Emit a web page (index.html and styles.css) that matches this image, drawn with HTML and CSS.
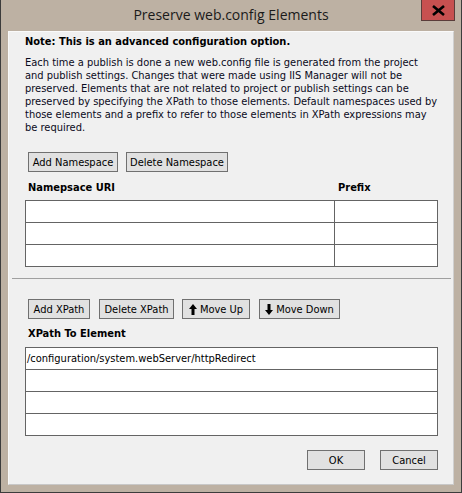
FILE: index.html
```html
<!DOCTYPE html>
<html>
<head>
<meta charset="utf-8">
<link rel="stylesheet" href="styles.css">
</head>
<body>
<div class="window">
  <div class="titlebar">
    <span class="title">Preserve web.config Elements</span>
    <div class="close">
      <svg width="13" height="11" viewBox="0 0 13 11"><path d="M1 1 L12 10 M12 1 L1 10" stroke="#000" stroke-width="2.6"/></svg>
    </div>
  </div>
  <div class="panel">
    <p class="note">Note: This is an advanced configuration option.</p>
    <p class="desc">Each time a publish is done a new web.config file is generated from the project and publish settings. Changes that were made using IIS Manager will not be preserved. Elements that are not related to project or publish settings can be preserved by specifying the XPath to those elements. Default namespaces used by those elements and a prefix to refer to those elements in XPath expressions may be required.</p>
    <div class="btnrow top">
      <button class="btn w-addns">Add Namespace</button>
      <button class="btn w-delns">Delete Namespace</button>
    </div>
    <div class="ns-head">
      <span class="h-uri">Namepsace URI</span>
      <span class="h-prefix">Prefix</span>
    </div>
    <div class="grid ns">
      <div class="row"><div class="cell uri"></div><div class="cell prefix"></div></div>
      <div class="row"><div class="cell uri"></div><div class="cell prefix"></div></div>
      <div class="row"><div class="cell uri"></div><div class="cell prefix"></div></div>
    </div>
    <div class="sep"></div>
    <div class="btnrow mid">
      <button class="btn w-addxp">Add XPath</button>
      <button class="btn w-delxp">Delete XPath</button>
      <button class="btn w-up"><svg class="arrow" width="8" height="11" viewBox="0 0 8 11"><path d="M4 0 L8 5 L5.5 5 L5.5 11 L2.5 11 L2.5 5 L0 5 Z" fill="#000"/></svg>Move Up</button>
      <button class="btn w-down"><svg class="arrow" width="8" height="11" viewBox="0 0 8 11"><path d="M4 11 L8 6 L5.5 6 L5.5 0 L2.5 0 L2.5 6 L0 6 Z" fill="#000"/></svg>Move Down</button>
    </div>
    <div class="xp-head">XPath To Element</div>
    <div class="grid xp">
      <div class="row"><div class="cell full">/configuration/system.webServer/httpRedirect</div></div>
      <div class="row"><div class="cell full"></div></div>
      <div class="row"><div class="cell full"></div></div>
      <div class="row"><div class="cell full"></div></div>
    </div>
    <div class="footer">
      <button class="btn w-ok">OK</button>
      <button class="btn w-cancel">Cancel</button>
    </div>
  </div>
</div>
</body>
</html>
```
FILE: styles.css
```css
* { box-sizing: border-box; }
html, body { margin: 0; padding: 0; }
body {
  width: 462px;
  height: 493px;
  font-family: "DejaVu Sans Condensed", "DejaVu Sans", sans-serif;
  font-size: 11px;
  color: #000;
  background: #bdb1a3;
}
.window {
  position: relative;
  width: 462px;
  height: 493px;
  background: #bdb1a3;
  border: 1px solid #3c3c3c;
  border-top: none;
  padding: 0 7px 7px 7px;
  display: flex;
  flex-direction: column;
}
.titlebar {
  height: 31px;
  display: flex;
  justify-content: center;
  align-items: flex-start;
}
.title {
  font-family: "Open Sans", "Noto Sans", sans-serif;
  font-size: 14px;
  line-height: 30px;
  color: #1a1a1a;
}
.close {
  position: absolute;
  top: 0;
  right: 6px;
  width: 34px;
  height: 21px;
  background: #c75050;
  border: 1px solid #5a3c3a;
  border-top: none;
  display: flex;
  align-items: center;
  justify-content: center;
}
.panel {
  flex: 1;
  background: #f0f0f0;
  border: 1px solid #fafafa;
  border-right-color: #d0d0d0;
  border-bottom-color: #c8c8c8;
  padding: 0 15px 0 16px;
  display: flex;
  flex-direction: column;
}
.note {
  margin: 3px 0 0 0;
  font-weight: bold;
  line-height: 13px;
}
.desc {
  margin: 8px 0 0 0;
  line-height: 13px;
  color: #0a0a20;
}
.btnrow {
  display: flex;
  gap: 8px;
  padding-left: 3px;
}
.btnrow.top { margin-top: 18px; }
.btnrow.mid { margin-top: 20px; }
.btn {
  height: 20px;
  margin: 0;
  padding: 0;
  background: #e1e1e1;
  border: 1px solid #707070;
  border-radius: 0;
  font-family: "DejaVu Sans Condensed", "DejaVu Sans", sans-serif;
  font-size: 11px;
  color: #000;
  display: flex;
  align-items: center;
  justify-content: center;
  gap: 3px;
}
.arrow { display: block; }
.w-addns { width: 90px; }
.w-delns { width: 102px; }
.w-addxp { width: 62px; }
.w-delxp { width: 75px; margin-left: 1px; }
.w-up { width: 68px; }
.w-down { width: 81px; margin-left: 1px; }
.w-ok { width: 58px; }
.w-cancel { width: 58px; }
.ns-head {
  margin-top: 9px;
  display: flex;
  font-weight: bold;
  line-height: 13px;
}
.h-uri { width: 309px; padding-left: 3px; }
.h-prefix { padding-left: 4px; }
.grid {
  background: #fff;
  border: 1px solid #646464;
}
.ns { margin-top: 6px; }
.row {
  display: flex;
  height: 22px;
  border-top: 1px solid #646464;
}
.row:first-child { height: 21px; border-top: none; }
.cell { height: 100%; }
.uri { width: 309px; border-right: 1px solid #646464; }
.prefix { flex: 1; }
.full {
  flex: 1;
  padding-left: 1px;
  line-height: 21px;
  white-space: nowrap;
}
.sep {
  margin: 11px -13px 0 -13px;
  height: 1px;
  background: #a0a0a0;
}
.xp-head {
  margin-top: 8px;
  padding-left: 3px;
  font-weight: bold;
  line-height: 13px;
}
.xp { margin-top: 7px; }
.footer {
  margin-top: 14px;
  display: flex;
  justify-content: flex-end;
  gap: 15px;
}
```
